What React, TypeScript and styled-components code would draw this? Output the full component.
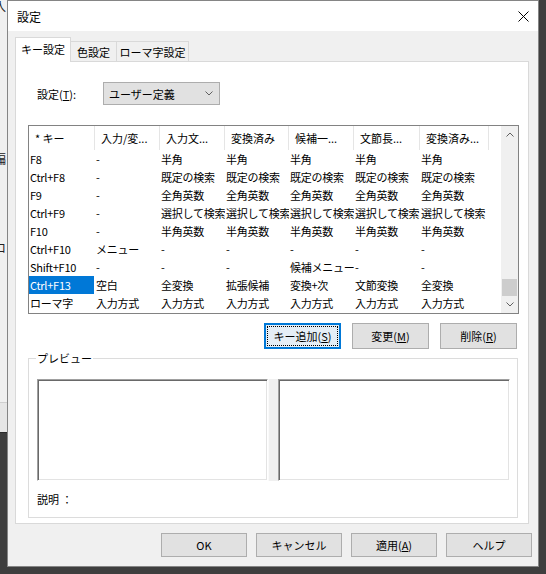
import { createGlobalStyle, styled } from 'styled-components';

const FONT = `"Noto Sans CJK JP", "Noto Sans", sans-serif`;

const GlobalStyle = createGlobalStyle`
  html, body {
    margin: 0;
    padding: 0;
  }
  body {
    background: #3c3c3c;
    font-family: ${FONT};
    font-size: 11px;
    color: #000;
  }
  * {
    box-sizing: border-box;
  }
`;

// column widths of the key list (px), measured from the header separators
const COLS = [66, 65, 65, 64, 65, 66, 69];

const HEADERS = [
  '* キー',
  '入力/変...',
  '入力文...',
  '変換済み',
  '候補一...',
  '文節長...',
  '変換済み...'
];

const ROWS = [
  ['F8', '-', '半角', '半角', '半角', '半角', '半角'],
  ['Ctrl+F8', '-', '既定の検索', '既定の検索', '既定の検索', '既定の検索', '既定の検索'],
  ['F9', '-', '全角英数', '全角英数', '全角英数', '全角英数', '全角英数'],
  ['Ctrl+F9', '-', '選択して検索', '選択して検索', '選択して検索', '選択して検索', '選択して検索'],
  ['F10', '-', '半角英数', '半角英数', '半角英数', '半角英数', '半角英数'],
  ['Ctrl+F10', 'メニュー', '-', '-', '-', '-', '-'],
  ['Shift+F10', '-', '-', '-', '候補メニュー', '-', '-'],
  ['Ctrl+F13', '空白', '全変換', '拡張候補', '変換+次', '文節変換', '全変換'],
  ['ローマ字', '入力方式', '入力方式', '入力方式', '入力方式', '入力方式', '入力方式']
];

const SELECTED_ROW = 7;

const Desktop = styled.div`
  position: relative;
  width: 546px;
  height: 574px;
  overflow: hidden;
  background: #3e3e3e;
`;

/* the window behind the dialog, only a sliver of it shows on the left */
const BackWindow = styled.div`
  position: absolute;
  left: 0;
  top: 0;
  width: 8px;
  height: 433px;
  background: #f0f0f0;
  overflow: hidden;
  display: flex;
  flex-direction: column;
  justify-content: flex-end;
`;

const BackGlyph = styled.span<{ $top: number }>`
  position: absolute;
  left: -6px;
  top: ${(p) => p.$top}px;
  font-size: 12px;
  line-height: 14px;
  color: #222;
`;

const BackStatus = styled.div`
  height: 31px;
  background: #e6e6e6;
  border-top: 1px solid #cfcfcf;
  border-bottom: 1px solid #2a2a2a;
`;

const Dialog = styled.div`
  position: absolute;
  left: 7px;
  top: 0;
  width: 532px;
  height: 567px;
  border: 1px solid #858585;
  background: #f0f0f0;
  display: flex;
  flex-direction: column;
`;

const TitleBar = styled.div`
  height: 30px;
  background: #fff;
  display: flex;
  align-items: center;
  justify-content: space-between;
  padding: 0 9px 0 9px;
  font-size: 12px;
`;

const Body = styled.div`
  flex: 1;
  display: flex;
  flex-direction: column;
  padding: 6px 6px 9px 7px;
`;

const TabStrip = styled.div`
  height: 24px;
  display: flex;
  align-items: flex-end;
`;

const Tab = styled.div<{ $active?: boolean; $w: number }>`
  position: relative;
  width: ${(p) => p.$w}px;
  height: ${(p) => (p.$active ? 25 : 20)}px;
  margin-bottom: ${(p) => (p.$active ? -1 : 0)}px;
  margin-left: ${(p) => (p.$active ? 0 : -1)}px;
  border: 1px solid #d9d9d9;
  border-bottom: none;
  background: ${(p) => (p.$active ? '#fff' : '#f0f0f0')};
  z-index: ${(p) => (p.$active ? 1 : 0)};
  display: flex;
  align-items: center;
  justify-content: center;
  padding-bottom: ${(p) => (p.$active ? 2 : 0)}px;
  line-height: 14px;

  &:first-child {
    margin-left: 0;
  }
`;

const Panel = styled.div`
  width: 514px;
  height: 463px;
  border: 1px solid #d9d9d9;
  background: #fff;
  display: flex;
  flex-direction: column;
  padding: 20px 9px 0 12px;
`;

const SettingRow = styled.div`
  display: flex;
  align-items: center;
  height: 23px;
`;

const FieldLabel = styled.label`
  width: 75px;
  padding-left: 9px;
  line-height: 14px;
`;

const Select = styled.div`
  width: 117px;
  height: 23px;
  background: #e1e1e1;
  border: 1px solid #adadad;
  display: flex;
  align-items: center;
  justify-content: space-between;
  padding: 0 6px 0 5px;
  line-height: 14px;
`;

const ListView = styled.div`
  margin-top: 20px;
  width: 491px;
  height: 189px;
  border: 1px solid #828282;
  background: #fff;
  display: flex;
`;

const ListContent = styled.div`
  flex: 1;
  display: flex;
  flex-direction: column;
  overflow: hidden;
`;

const HeaderRow = styled.div`
  height: 24px;
  display: flex;
  flex-shrink: 0;
`;

const HeaderCell = styled.div<{ $w: number }>`
  width: ${(p) => p.$w}px;
  flex-shrink: 0;
  height: 24px;
  line-height: 24px;
  padding-left: 6px;
  border-right: 1px solid #e5e5e5;
  white-space: nowrap;
  overflow: hidden;
`;

const Row = styled.div`
  height: 18px;
  display: flex;
  flex-shrink: 0;
`;

const Cell = styled.div<{ $w: number; $selected?: boolean }>`
  width: ${(p) => p.$w}px;
  flex-shrink: 0;
  height: 18px;
  line-height: 18px;
  padding-left: 1px;
  letter-spacing: -0.25px;
  background: ${(p) => (p.$selected ? '#0078d7' : 'transparent')};
  box-shadow: ${(p) => (p.$selected ? 'inset -1px 0 0 #fff' : 'none')};
  color: ${(p) => (p.$selected ? '#fff' : '#000')};
  white-space: nowrap;
  overflow: hidden;
`;

const ScrollBar = styled.div`
  width: 17px;
  background: #f0f0f0;
  display: flex;
  flex-direction: column;
`;

const ScrollArrow = styled.div`
  height: 17px;
  display: flex;
  align-items: center;
  justify-content: center;
  flex-shrink: 0;
`;

const ScrollTrack = styled.div`
  flex: 1;
  display: flex;
  flex-direction: column;
  justify-content: flex-end;
`;

const ScrollThumb = styled.div`
  height: 17px;
  margin: 0 1px;
  background: #cdcdcd;
`;

const ButtonRow = styled.div<{ $gap: number; $mt: number; $mr?: number }>`
  display: flex;
  justify-content: flex-end;
  gap: ${(p) => p.$gap}px;
  margin-top: ${(p) => p.$mt}px;
  margin-right: ${(p) => p.$mr || 0}px;
`;

const Button = styled.button<{ $w: number; $h: number; $focused?: boolean }>`
  position: relative;
  width: ${(p) => p.$w}px;
  height: ${(p) => p.$h}px;
  padding: 0;
  font-family: ${FONT};
  font-size: 11px;
  line-height: 14px;
  color: #000;
  background: ${(p) => (p.$focused ? '#e5eef6' : '#e1e1e1')};
  border: 1px solid ${(p) => (p.$focused ? '#0078d7' : '#adadad')};
  box-shadow: ${(p) => (p.$focused ? 'inset 0 0 0 1px #0078d7' : 'none')};
  outline: none;

  &::after {
    content: '';
    display: ${(p) => (p.$focused ? 'block' : 'none')};
    position: absolute;
    inset: 2px;
    border: 1px dotted #000;
  }
`;

const GroupBox = styled.div`
  position: relative;
  margin-top: 9px;
  width: 490px;
  height: 160px;
  border: 1px solid #dcdcdc;
  padding: 20px 7px 0 8px;
  display: flex;
  flex-direction: column;
`;

const GroupLegend = styled.span`
  position: absolute;
  left: 7px;
  top: -8px;
  padding: 0 1px;
  background: #fff;
  line-height: 14px;
`;

const PreviewRow = styled.div`
  display: flex;
  height: 102px;
`;

const PreviewBox = styled.div<{ $w: number }>`
  width: ${(p) => p.$w}px;
  height: 102px;
  background: #fff;
  border: 1px solid;
  border-color: #a0a0a0 #fff #fff #a0a0a0;
  box-shadow:
    inset 1px 1px 0 #696969,
    inset -1px -1px 0 #e3e3e3;
`;

const Splitter = styled.div`
  width: 10px;
  height: 102px;
  background: #f0f0f0;
  border-left: 1px solid #fafafa;
`;

const Description = styled.div`
  margin-top: 11px;
  line-height: 14px;
`;

const CloseIcon = () => (
  <svg width="11" height="11" viewBox="0 0 11 11">
    <path d="M0.5 0.5 L10.5 10.5 M10.5 0.5 L0.5 10.5" stroke="#000" strokeWidth="1" fill="none" />
  </svg>
);

const Chevron = ({ up, color = '#606060' }: { up?: boolean; color?: string }) => (
  <svg width="8" height="5" viewBox="0 0 8 5">
    <path
      d={up ? 'M0.5 4.5 L4 1 L7.5 4.5' : 'M0.5 0.5 L4 4 L7.5 0.5'}
      stroke={color}
      strokeWidth="1"
      fill="none"
    />
  </svg>
);

export default function App() {
  return (
    <>
      <GlobalStyle />
      <Desktop>
        <BackWindow>
          <BackGlyph $top={-1}>入</BackGlyph>
          <BackGlyph $top={152}>編</BackGlyph>
          <BackGlyph $top={241}>ロ</BackGlyph>
          <BackStatus />
        </BackWindow>
        <Dialog>
          <TitleBar>
            <span>設定</span>
            <CloseIcon />
          </TitleBar>
          <Body>
            <TabStrip>
              <Tab $active $w={56}>キー設定</Tab>
              <Tab $w={47}>色設定</Tab>
              <Tab $w={73}>ローマ字設定</Tab>
            </TabStrip>
            <Panel>
              <SettingRow>
                <FieldLabel>
                  設定(<u>T</u>):
                </FieldLabel>
                <Select>
                  <span>ユーザー定義</span>
                  <Chevron />
                </Select>
              </SettingRow>

              <ListView>
                <ListContent>
                  <HeaderRow>
                    {HEADERS.map((h, i) => (
                      <HeaderCell key={i} $w={COLS[i]}>
                        {h}
                      </HeaderCell>
                    ))}
                  </HeaderRow>
                  {ROWS.map((row, r) => (
                    <Row key={r}>
                      {row.map((text, c) => (
                        <Cell key={c} $w={COLS[c]} $selected={r === SELECTED_ROW && c === 0}>
                          {text}
                        </Cell>
                      ))}
                    </Row>
                  ))}
                </ListContent>
                <ScrollBar>
                  <ScrollArrow>
                    <Chevron up />
                  </ScrollArrow>
                  <ScrollTrack>
                    <ScrollThumb />
                  </ScrollTrack>
                  <ScrollArrow>
                    <Chevron />
                  </ScrollArrow>
                </ScrollBar>
              </ListView>

              <ButtonRow $gap={11} $mt={9} $mr={2}>
                <Button $w={77} $h={26} $focused>
                  キー追加(<u>S</u>)
                </Button>
                <Button $w={77} $h={26}>
                  変更(<u>M</u>)
                </Button>
                <Button $w={77} $h={26}>
                  削除(<u>R</u>)
                </Button>
              </ButtonRow>

              <GroupBox>
                <GroupLegend>プレビュー</GroupLegend>
                <PreviewRow>
                  <PreviewBox $w={231} />
                  <Splitter />
                  <PreviewBox $w={232} />
                </PreviewRow>
                <Description>説明 ：</Description>
              </GroupBox>
            </Panel>

            <ButtonRow $gap={9} $mt={9}>
              <Button $w={86} $h={24}>OK</Button>
              <Button $w={86} $h={24}>キャンセル</Button>
              <Button $w={86} $h={24}>
                適用(<u>A</u>)
              </Button>
              <Button $w={86} $h={24}>ヘルプ</Button>
            </ButtonRow>
          </Body>
        </Dialog>
      </Desktop>
    </>
  );
}
